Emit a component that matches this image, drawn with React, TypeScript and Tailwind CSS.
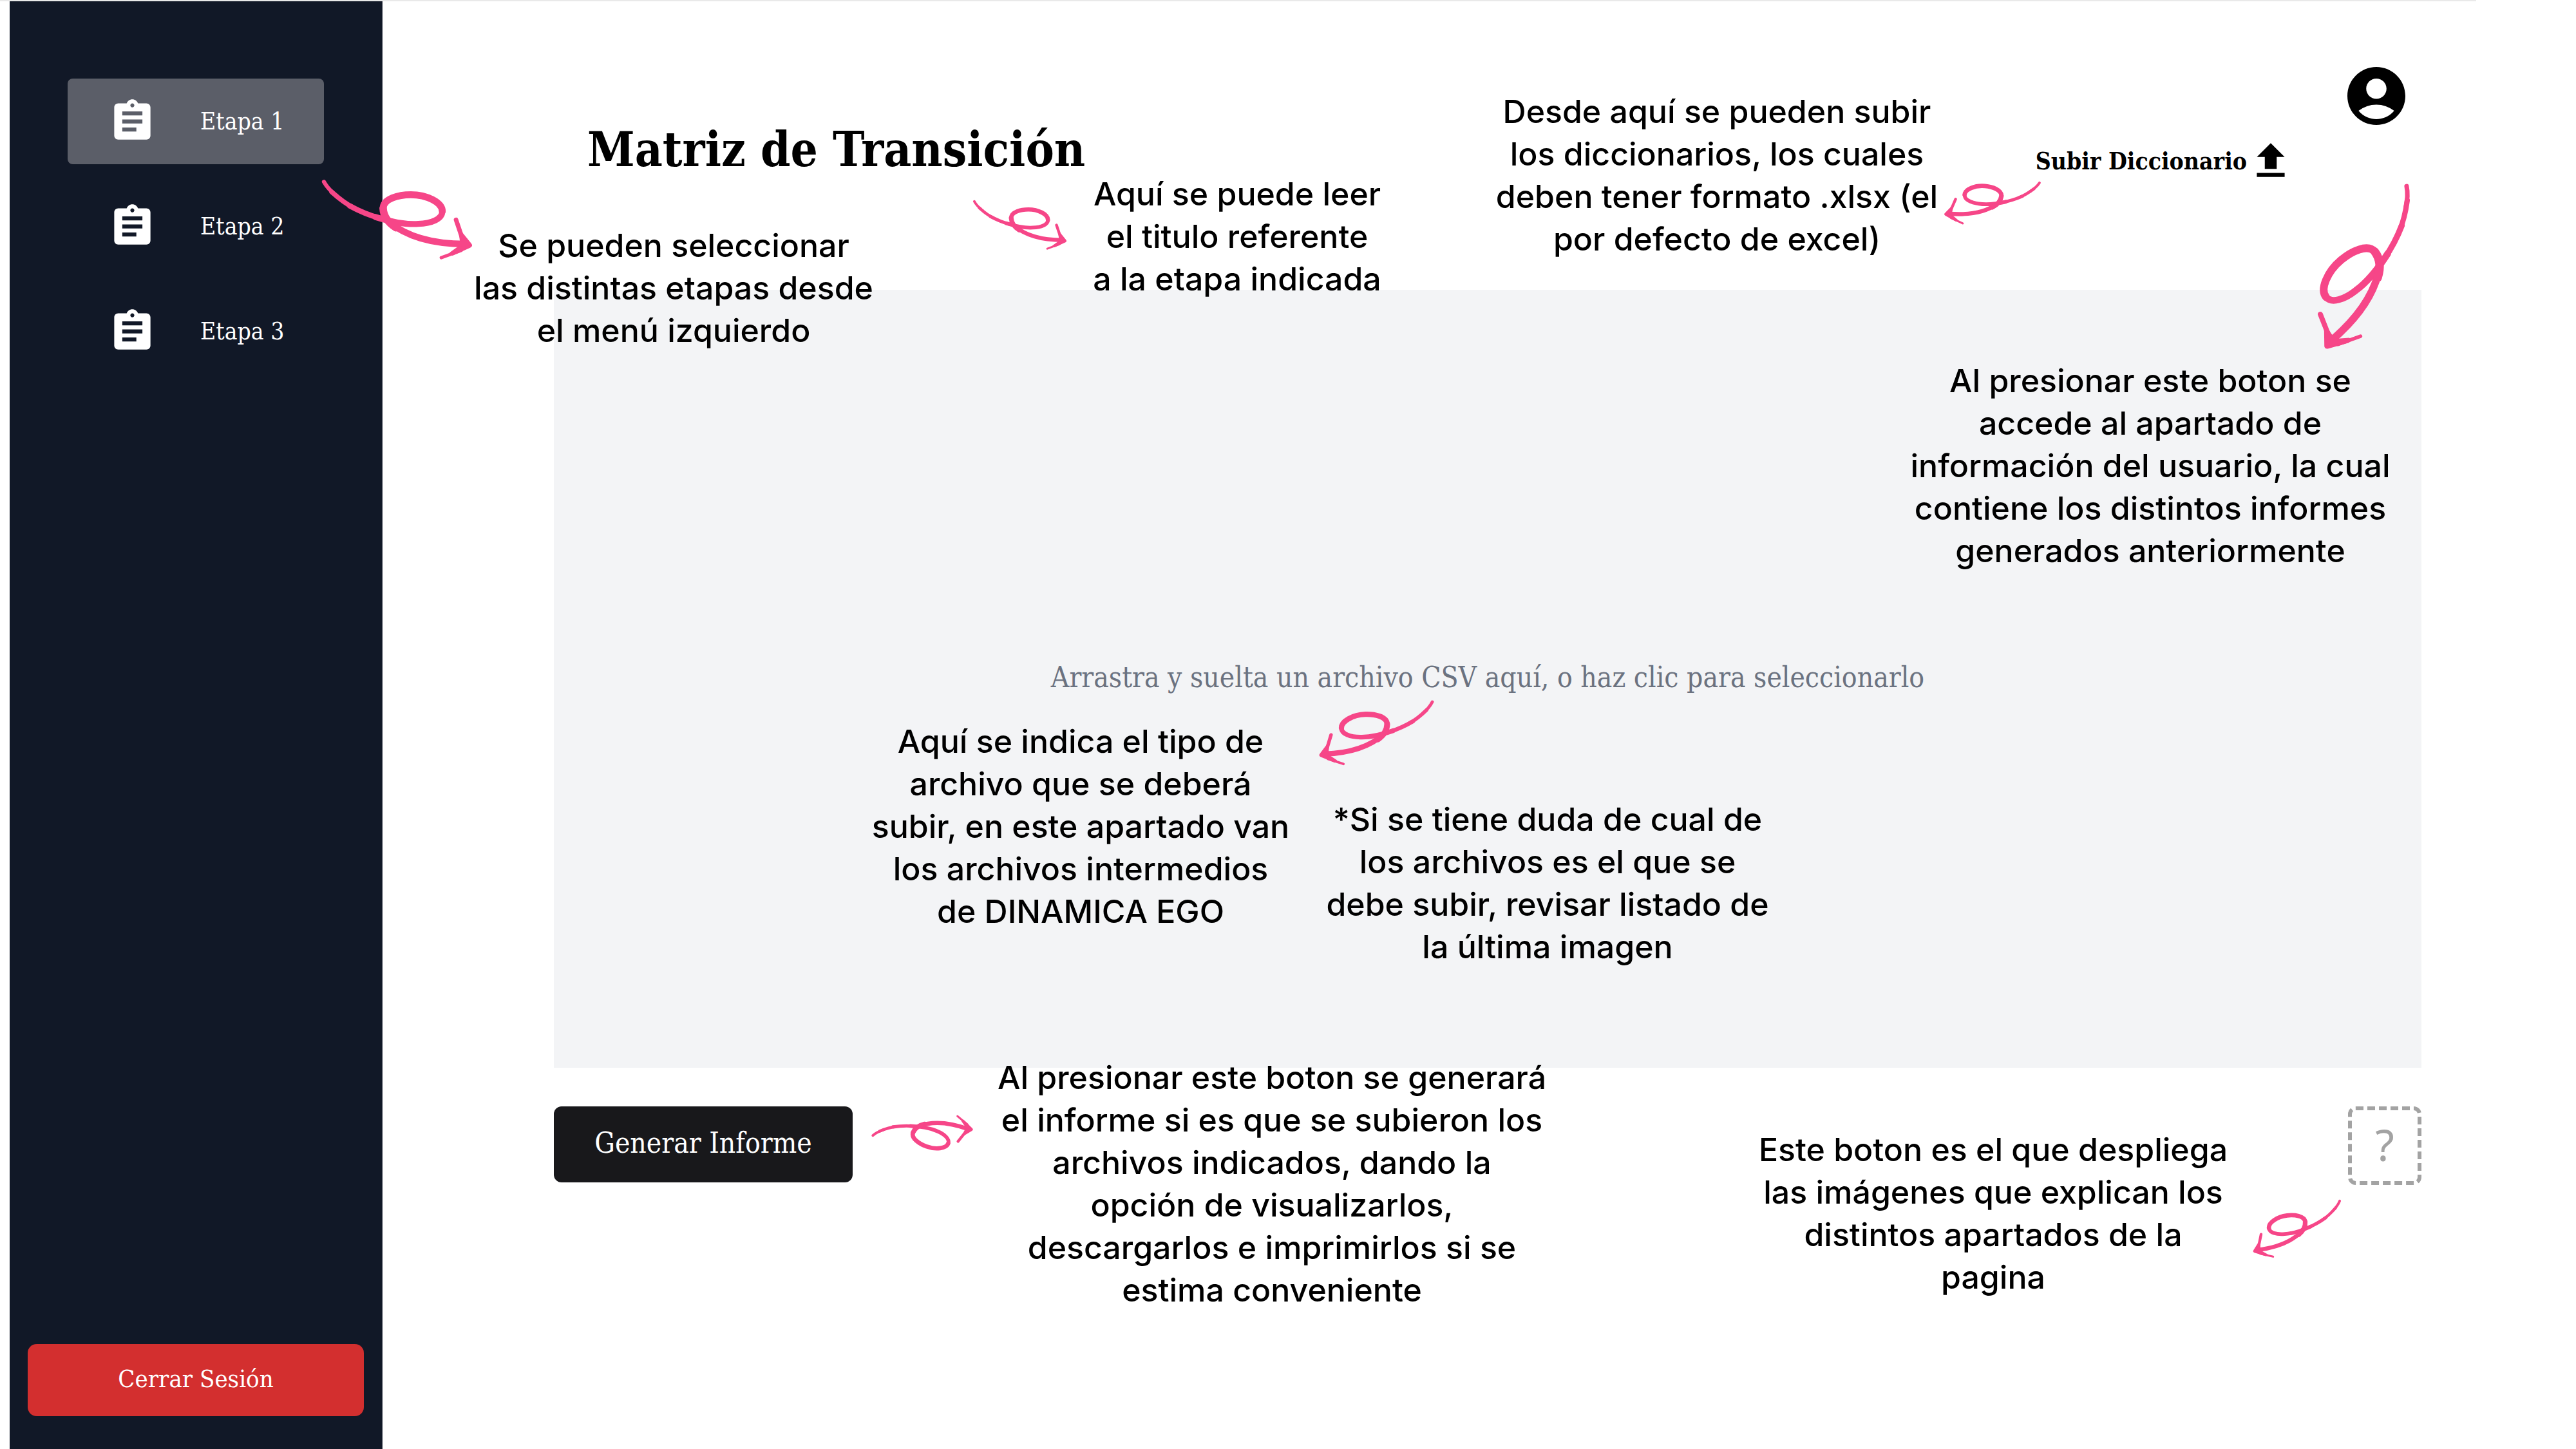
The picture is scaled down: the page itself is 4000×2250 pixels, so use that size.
import React from "react";

const stages = ["Etapa 1", "Etapa 2", "Etapa 3"];

function AssignmentIcon() {
  return (
    <svg viewBox="0 0 24 24" fill="currentColor" className="size-[75px] shrink-0" aria-hidden="true">
      <path d="M19 3h-4.180C14.400 1.840 13.300 1 12 1s-2.400.84-2.820 2H5c-1.100 0-2 .9-2 2v14c0 1.100.9 2 2 2h14c1.100 0 2-.9 2-2V5c0-1.100-.9-2-2-2zm-7 0c.55 0 1 .45 1 1s-.45 1-1 1-1-.45-1-1 .45-1 1-1zm2 14H7v-2h7v2zm3-4H7v-2h10v2zm0-4H7V7h10v2z" />
    </svg>
  );
}

function UploadIcon() {
  return (
    <svg viewBox="0 0 24 24" fill="currentColor" className="size-[74px] shrink-0" aria-hidden="true">
      <path d="M5 20h14v-2H5v2zm0-10h4v6h6v-6h4l-7-7-7 7z" />
    </svg>
  );
}

function UserIcon() {
  return (
    <svg viewBox="0 0 24 24" fill="currentColor" className="size-[108px]" aria-hidden="true">
      <path d="M12 2C6.480 2 2 6.480 2 12s4.480 10 10 10 10-4.480 10-10S17.520 2 12 2zm0 4c1.930 0 3.500 1.570 3.500 3.500S13.930 13 12 13s-3.500-1.570-3.500-3.500S10.070 6 12 6zm0 14c-2.030 0-4.430-.82-6.140-2.880a9.947 9.947 0 0 1 12.280 0C16.430 19.180 14.030 20 12 20z" />
    </svg>
  );
}

/* Hand-drawn looping arrow; its tail sits on the svg origin. */
function Doodle({ place, transform }: { place: string; transform: string }) {
  return (
    <svg className={`pointer-events-none absolute z-10 size-px overflow-visible ${place}`} aria-hidden="true">
      <g transform={transform} fill="none" stroke="#f64688" strokeLinecap="round" strokeLinejoin="round">
        <path strokeWidth="19" d="M0 4C14 30 36 52 62 72" />
        <path strokeWidth="22" d="M36 51C68 80 104 108 142 127" />
        <path strokeWidth="25" d="M120 116C160 138 210 160 262 174" />
        <path strokeWidth="28" d="M240 168C310 190 380 204 440 200C500 198 552 178 552 142" />
        <path strokeWidth="32" d="M552 142C552 100 480 64 405 64C350 64 276 82 276 128" />
        <path strokeWidth="35" d="M276 128C278 165 300 195 336 218" />
        <path strokeWidth="31" d="M300 188C380 256 500 294 660 294" />
        <path strokeWidth="21" d="M616 181L650 282" />
        <path strokeWidth="15" d="M547 358L640 324" />
        <path fill="#f64688" strokeWidth="8" d="M632 230L684 294Q692 302 680 308L600 344L590 336L640 300Z" />
      </g>
    </svg>
  );
}

function Note({ place, lines }: { place: string; lines: string[] }) {
  return (
    <p
      className={`pointer-events-none absolute z-10 text-center font-['Inter',sans-serif] text-[50px] leading-[66px] font-medium whitespace-nowrap text-black ${place}`}
    >
      {lines.map((line) => (
        <span key={line} className="block">
          {line}
        </span>
      ))}
    </p>
  );
}

export default function App() {
  return (
    <div className="flex min-h-screen flex-col bg-white font-['DejaVu_Serif_Condensed','DejaVu_Serif',serif]">
      <div className="mr-[155px] h-[2px] bg-[#e9e9e9]" />
      <div className="flex grow">
        <aside className="ml-[15px] flex w-[580px] shrink-0 flex-col border-r-2 border-[#8a8d95] bg-[#111827] px-7 pt-[120px] pb-[51px] text-white">
          <nav className="flex flex-col gap-[30px] px-[62px]">
            {stages.map((stage, i) => (
              <button
                key={stage}
                type="button"
                className={
                  i === 0
                    ? "flex h-[133px] items-center gap-[68px] rounded-lg bg-[#5b5e68] pl-[63px] text-[37px]"
                    : "flex h-[133px] items-center gap-[68px] rounded-lg pl-[63px] text-[37px]"
                }
              >
                <AssignmentIcon />
                {stage}
              </button>
            ))}
          </nav>
          <button type="button" className="mt-auto h-[112px] rounded-[14px] bg-[#d32f2f] pb-1 text-[38px]">
            Cerrar Sesión
          </button>
        </aside>

        <main className="flex min-w-0 grow flex-col pr-[240px] pb-[410px] pl-[265px]">
          <header className="relative flex h-[448px] items-start pt-[93px] pr-4 pl-[52px]">
            <h1 className="mt-[87px] text-[74px] leading-[100px] font-bold text-black">Matriz de Transición</h1>
            <button type="button" className="mt-[118px] mr-[73px] ml-auto flex items-center text-[37px] leading-[60px] font-bold text-black">
              Subir Diccionario
              <UploadIcon />
            </button>
            <button type="button" aria-label="Usuario" className="text-black">
              <UserIcon />
            </button>

            <Doodle place="top-[279px] left-[-357px]" transform="scale(0.333)" />
            <Note
              place="top-[346px] left-[-134px] w-[640px]"
              lines={["Se pueden seleccionar", "las distintas etapas desde", "el menú izquierdo"]}
            />
            <Doodle place="top-[310px] left-[653px]" transform="scale(0.207)" />
            <Note
              place="top-[266px] left-[821px] w-[480px]"
              lines={["Aquí se puede leer", "el titulo referente", "a la etapa indicada"]}
            />
            <Note
              place="top-[138px] right-[734px] w-[720px]"
              lines={["Desde aquí se pueden subir", "los diccionarios, los cuales", "deben tener formato .xlsx (el", "por defecto de excel)"]}
            />
            <Doodle place="top-[281px] right-[592px]" transform="rotate(5) scale(-0.207 0.207)" />
            <Doodle place="top-[286px] right-[23px]" transform="rotate(-40) scale(-0.374 0.374)" />
          </header>

          <section className="relative flex grow flex-col">
            <label className="flex grow cursor-pointer items-center justify-center bg-[#f3f4f6] pb-1 text-[44px] text-[#6b7280]">
              Arrastra y suelta un archivo CSV aquí, o haz clic para seleccionarlo
              <input type="file" accept=".csv" className="sr-only" />
            </label>
            <Note
              place="top-[108px] right-[41px] w-[760px]"
              lines={[
                "Al presionar este boton se",
                "accede al apartado de",
                "información del usuario, la cual",
                "contiene los distintos informes",
                "generados anteriormente",
              ]}
            />
            <Doodle place="top-[calc(50%+35px)] left-[calc(50%-86px)]" transform="rotate(-2) scale(-0.258 0.258)" />
            <Note
              place="top-[calc(50%+64px)] left-[calc(50%-972px)] w-[680px]"
              lines={[
                "Aquí se indica el tipo de",
                "archivo que se deberá",
                "subir, en este apartado van",
                "los archivos intermedios",
                "de DINAMICA EGO",
              ]}
            />
            <Note
              place="top-[calc(50%+185px)] left-[calc(50%-267px)] w-[720px]"
              lines={["*Si se tiene duda de cual de", "los archivos es el que se", "debe subir, revisar listado de", "la última imagen"]}
            />
          </section>

          <footer className="relative mt-[60px] flex items-start justify-between">
            <button type="button" className="h-[118px] w-[464px] rounded-xl bg-[#18181b] pb-1 text-[44px] text-white">
              Generar Informe
            </button>
            <button
              type="button"
              aria-label="Ayuda"
              className="h-[122px] w-[114px] rounded-xl border-6 border-dashed border-[#a3a3a3] pb-1 font-['Noto_Sans',sans-serif] text-[68px] leading-[100px] text-[#a3a3a3]"
            >
              ?
            </button>

            <Doodle place="top-[46px] left-[495px]" transform="rotate(20) scale(0.207 -0.207)" />
            <Note
              place="top-[-78px] left-[675px] w-[880px]"
              lines={[
                "Al presionar este boton se generará",
                "el informe si es que se subieron los",
                "archivos indicados, dando la",
                "opción de visualizarlos,",
                "descargarlos e imprimirlos si se",
                "estima conveniente",
              ]}
            />
            <Note
              place="top-[34px] right-[285px] w-[760px]"
              lines={["Este boton es el que despliega", "las imágenes que explican los", "distintos apartados de la", "pagina"]}
            />
            <Doodle place="top-[146px] right-[126px]" transform="rotate(-7) scale(-0.207 0.207)" />
          </footer>
        </main>
      </div>
    </div>
  );
}
